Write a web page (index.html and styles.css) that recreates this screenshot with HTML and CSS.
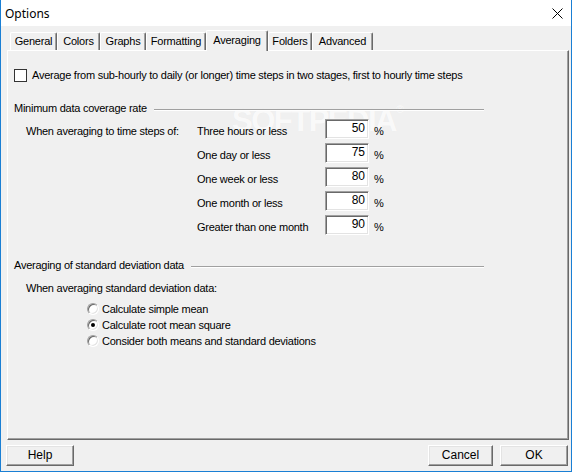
FILE: index.html
```html
<!DOCTYPE html>
<html>
<head>
<meta charset="utf-8">
<link rel="stylesheet" href="styles.css">
</head>
<body>
<div class="window">
  <div class="titlebar">
    <span class="title">Options</span>
    <svg class="close" width="11" height="11" viewBox="0 0 11 11"><path d="M0.5 0.5 L10.5 10.5 M10.5 0.5 L0.5 10.5" stroke="#000" stroke-width="1" fill="none"/></svg>
  </div>
  <div class="client">
    <div class="tabs">
      <div class="tab t1">General</div>
      <div class="tab t2">Colors</div>
      <div class="tab t3">Graphs</div>
      <div class="tab t4">Formatting</div>
      <div class="tab t5 active">Averaging</div>
      <div class="tab t6">Folders</div>
      <div class="tab t7">Advanced</div>
    </div>
    <div class="panel">
      <div class="watermark">SOFTPEDIA<span class="reg">®</span></div>
      <div class="content">
        <div class="check-row">
          <span class="checkbox"></span>
          <span class="check-label">Average from sub-hourly to daily (or longer) time steps in two stages, first to hourly time steps</span>
        </div>
        <div class="group-head head1">
          <span class="group-title">Minimum data coverage rate</span>
          <span class="rule"></span>
        </div>
        <div class="coverage">
          <div class="cov-intro">When averaging to time steps of:</div>
          <div class="cov-label">Three hours or less</div>
          <div class="cov-input">50</div>
          <div class="cov-pct">%</div>

          <div class="cov-empty"></div>
          <div class="cov-label">One day or less</div>
          <div class="cov-input">75</div>
          <div class="cov-pct">%</div>

          <div class="cov-empty"></div>
          <div class="cov-label">One week or less</div>
          <div class="cov-input">80</div>
          <div class="cov-pct">%</div>

          <div class="cov-empty"></div>
          <div class="cov-label">One month or less</div>
          <div class="cov-input">80</div>
          <div class="cov-pct">%</div>

          <div class="cov-empty"></div>
          <div class="cov-label">Greater than one month</div>
          <div class="cov-input">90</div>
          <div class="cov-pct">%</div>
        </div>
        <div class="group-head head2">
          <span class="group-title">Averaging of standard deviation data</span>
          <span class="rule"></span>
        </div>
        <div class="sd-intro">When averaging standard deviation data:</div>
        <div class="radios">
          <div class="radio-row"><span class="radio"></span><span>Calculate simple mean</span></div>
          <div class="radio-row"><span class="radio checked"></span><span>Calculate root mean square</span></div>
          <div class="radio-row"><span class="radio"></span><span>Consider both means and standard deviations</span></div>
        </div>
      </div>
    </div>
    <div class="buttons">
      <div class="btn btn-help">Help</div>
      <div class="spacer"></div>
      <div class="btn btn-cancel">Cancel</div>
      <div class="btn btn-ok">OK</div>
    </div>
  </div>
</div>
</body>
</html>
```

FILE: styles.css
```css
* { box-sizing: border-box; }
html, body { margin: 0; padding: 0; }
body {
  width: 572px;
  height: 472px;
  overflow: hidden;
  background: #f0f0f0;
  font-family: "Liberation Sans", Arial, sans-serif;
  font-size: 11px;
  color: #000;
}
.window {
  width: 572px;
  height: 472px;
  border-left: 1px solid #1a7fd4;
  border-right: 1px solid #1a7fd4;
  border-bottom: 1px solid #1a7fd4;
  background: #f0f0f0;
  display: flex;
  flex-direction: column;
}
.titlebar {
  height: 26px;
  background: #fff;
  display: flex;
  align-items: center;
  justify-content: space-between;
  padding-left: 4px;
  padding-right: 8px;
}
.title {
  font-family: "Noto Sans", "Open Sans", sans-serif;
  font-size: 12px;
  color: #000;
}
.close { display: block; margin-top: 1px; }
.client {
  flex: 1;
  display: flex;
  flex-direction: column;
}
.tabs {
  height: 24px;
  display: flex;
  align-items: flex-end;
  padding-left: 9px;
  position: relative;
  z-index: 2;
}
.tab {
  height: 18px;
  line-height: 17px;
  text-align: center;
  border-top: 1px solid #fff;
  border-left: 1px solid #fff;
  border-right: 1px solid #696969;
  box-shadow: inset -1px 0 #a0a0a0;
  border-radius: 2px 2px 0 0;
  background: #f0f0f0;
  letter-spacing: -0.2px;
  white-space: nowrap;
}
.tab.active {
  height: 21px;
  margin-bottom: -1px;
  line-height: 18px;
}
.t1 { width: 47px; }
.t2 { width: 43px; }
.t3 { width: 46px; }
.t4 { width: 60px; }
.t5 { width: 62px; }
.t6 { width: 44px; }
.t7 { width: 61px; }
.panel {
  position: relative;
  margin-left: 6px;
  width: 562px;
  height: 390px;
  border-top: 1px solid #fff;
  border-left: 1px solid #fff;
  border-right: 1px solid #696969;
  border-bottom: 1px solid #696969;
  box-shadow: inset -1px -1px #a0a0a0;
  padding-left: 6px;
  letter-spacing: -0.25px;
}
.content {
  position: relative;
  z-index: 1;
}
.watermark {
  position: absolute;
  z-index: 0;
  left: 224px;
  top: 52px;
  font-family: "Liberation Sans", Arial, sans-serif;
  font-weight: bold;
  font-size: 31px;
  letter-spacing: -1.5px;
  color: rgba(255,255,255,0.8);
  text-shadow: 0 0 1px rgba(0,0,0,0.04);
  pointer-events: none;
}
.watermark .reg {
  font-size: 11px;
  vertical-align: top;
  font-weight: normal;
}
.check-row {
  margin-top: 16px;
  height: 16px;
  display: flex;
  align-items: center;
}
.checkbox {
  width: 13px;
  height: 13px;
  border: 1px solid #333;
  background: #fff;
  margin-right: 5px;
  flex: none;
}
.group-head {
  height: 16px;
  width: 470px;
  display: flex;
  align-items: center;
}
.head1 { margin-top: 17px; }
.head2 { margin-top: 18px; }
.group-title { white-space: nowrap; }
.rule {
  flex: 1;
  height: 2px;
  margin-left: 7px;
  margin-top: 3px;
  border-top: 1px solid #a0a0a0;
  border-bottom: 1px solid #fff;
}
.coverage {
  margin-top: 3px;
  margin-left: 12px;
  display: grid;
  grid-template-columns: 171px 128px 44px auto;
  grid-auto-rows: 24px;
}
.cov-intro, .cov-label, .cov-pct {
  line-height: 24px;
  white-space: nowrap;
}
.cov-pct { padding-left: 5px; }
.cov-input {
  height: 20px;
  width: 44px;
  background: #fff;
  border-top: 1px solid #a0a0a0;
  border-left: 1px solid #a0a0a0;
  border-right: 1px solid #fff;
  border-bottom: 1px solid #fff;
  box-shadow: inset 1px 1px #696969, inset -1px -1px #e3e3e3;
  text-align: right;
  padding-right: 3px;
  line-height: 17px;
  font-size: 12px;
  letter-spacing: 0;
}
.sd-intro {
  margin-top: 7px;
  margin-left: 12px;
  height: 16px;
  line-height: 16px;
}
.radios {
  margin-top: 5px;
  margin-left: 73px;
}
.radio-row {
  height: 16px;
  display: flex;
  align-items: center;
}
.radio {
  width: 12px;
  height: 12px;
  border-radius: 50%;
  background: #fff;
  border: 1px solid;
  border-color: #a0a0a0 #fff #fff #a0a0a0;
  box-shadow: inset 1px 1px #696969, inset -1px -1px #e3e3e3;
  margin-right: 3px;
  flex: none;
  display: flex;
  align-items: center;
  justify-content: center;
}
.radio.checked::after {
  content: "";
  width: 4px;
  height: 4px;
  border-radius: 50%;
  background: #000;
}
.buttons {
  margin-top: 5px;
  height: 21px;
  display: flex;
  padding-left: 5px;
  padding-right: 3px;
}
.spacer { flex: 1; }
.btn {
  height: 21px;
  line-height: 19px;
  text-align: center;
  font-size: 12px;
  background: #f0f0f0;
  border-top: 1px solid #fff;
  border-left: 1px solid #fff;
  border-right: 1px solid #696969;
  border-bottom: 1px solid #696969;
  box-shadow: inset -1px -1px #a0a0a0, inset 1px 1px #e3e3e3;
}
.btn-help { width: 68px; }
.btn-cancel { width: 65px; margin-right: 7px; }
.btn-ok { width: 68px; }
```
